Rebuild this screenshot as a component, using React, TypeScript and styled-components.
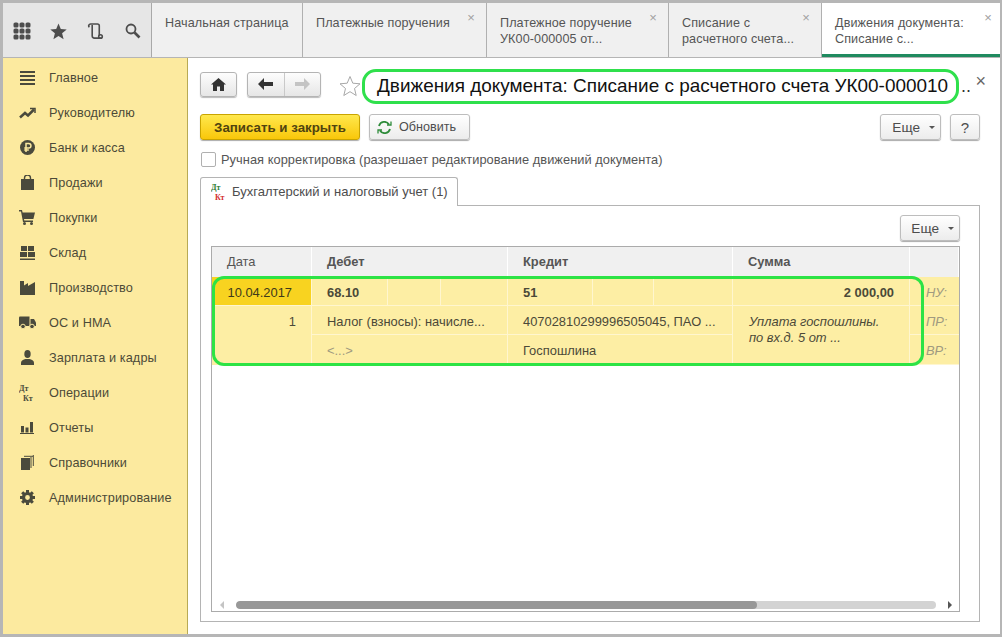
import React from 'react';
import styled, { createGlobalStyle } from 'styled-components';

const Global = createGlobalStyle`
  html, body { margin: 0; padding: 0; background: #b4b4b4; }
  * { box-sizing: border-box; }
  body { font-family: "Liberation Sans", Arial, sans-serif; }
`;

const Page = styled.div`
  width: 1002px; height: 637px; overflow: hidden;
  padding: 3px 2px 3px 3px;
  background: #b6b6b6;
  display: flex; flex-direction: column;
`;
const TopBar = styled.div`
  height: 55px; flex: none; display: flex; background: #efefef;
  border-bottom: 1px solid #b5b5b5;
`;
const QuickTools = styled.div`
  width: 149px; flex: none; display: flex; align-items: center;
  padding: 2px 0 0 0; background: #e6e6e6; border-right: 1px solid #a9a9a9;
`;
const ToolSlot = styled.div`
  width: 37px; height: 24px; display: flex; align-items: center; justify-content: center;
`;
const Tab = styled.div<{ $w: number; $active?: boolean }>`
  position: relative; width: ${p => p.$w}px; flex: ${p => (p.$active ? '1' : 'none')};
  padding: 12px 0 0 13px; font-size: 12.6px; line-height: 16px; color: #555;
  letter-spacing: 0.1px;
  background: ${p => (p.$active ? '#fff' : '#f0f0f0')};
  border-right: ${p => (p.$active ? '0' : '1px solid #b0b0b0')};
  ${p => (p.$active ? 'border-bottom: 3px solid #1f8a5f;' : '')}
  white-space: pre;
`;
const TabClose = styled.span<{ $active?: boolean }>`
  position: absolute; top: 8px; right: ${p => (p.$active ? 8 : 11)}px;
  font-size: 13px; line-height: 13px; color: #a0a0a0;
`;
const Body = styled.div`
  flex: 1; display: flex; min-height: 0; background: #fff;
`;
const Sidebar = styled.nav`
  width: 185px; flex: none; padding: 2px 0 0 0; background: #fcea9f; border-right: 1px solid #b8aa55;
`;
const NavItem = styled.div`
  height: 35px; display: flex; align-items: center; padding-left: 15px;
  font-size: 12.7px; color: #4c4a38; letter-spacing: 0.1px;
`;
const NavIcon = styled.div`
  width: 18px; margin-right: 13px; height: 18px; flex: none; display: flex; align-items: center; justify-content: center;
`;
const Content = styled.main`
  flex: 1; min-width: 0; padding: 11px 20px 12px 12px; display: flex; flex-direction: column;
`;
const TitleRow = styled.div`
  height: 34px; flex: none; display: flex; align-items: center; margin-bottom: 11px; position: relative;
`;
const NavButton = styled.div<{ $w: number }>`
  width: ${p => p.$w}px; height: 25px; margin-bottom: 4px; display: flex; align-items: center; justify-content: center;
  border: 1px solid #b4b4b4; border-radius: 3px;
  background: linear-gradient(#fdfdfd, #e6e6e6); box-shadow: 0 1px 1px #bbb;
`;
const NavGroup = styled.div`
  width: 74px; height: 25px; display: flex; margin: 0 18px 4px 10px;
  border: 1px solid #b4b4b4; border-radius: 3px; overflow: hidden;
  background: linear-gradient(#fdfdfd, #e6e6e6); box-shadow: 0 1px 1px #bbb;
`;
const NavHalf = styled.div<{ $divider?: boolean }>`
  flex: 1; display: flex; align-items: center; justify-content: center;
  ${p => (p.$divider ? 'border-right: 1px solid #c9c9c9;' : '')}
`;
const TitlePill = styled.div`
  width: 597px; height: 35px; margin-left: 1px; flex: none; padding-left: 12px; display: flex; align-items: center;
  border: 3px solid #2fe04c; border-radius: 14px;
  font-size: 18.95px; color: #111; white-space: nowrap; overflow: hidden;
`;
const Ellipsis = styled.span`
  font-size: 18px; color: #333; margin-left: 2px; align-self: center;
`;
const CloseX = styled.span`
  position: absolute; right: -6px; top: 2px; font-size: 18px; line-height: 20px; color: #666;
`;
const Toolbar = styled.div`
  height: 26px; flex: none; display: flex; align-items: center; gap: 9px; margin-bottom: 11px;
`;
const PrimaryButton = styled.div`
  width: 160px; height: 26px; display: flex; align-items: center; justify-content: center;
  font-size: 13.3px; font-weight: bold; color: #4f4310;
  border: 1px solid #c9a400; border-radius: 3px;
  background: linear-gradient(#ffe84d, #f9c70a); box-shadow: 0 1px 1px #aaa;
`;
const Button = styled.div<{ $w: number }>`
  width: ${p => p.$w}px; height: 26px; display: flex; align-items: center; justify-content: center; gap: 7px; flex: none;
  font-size: 13px; color: #4d4d4d;
  border: 1px solid #bdbdbd; border-radius: 3px;
  background: linear-gradient(#ffffff, #ececec); box-shadow: 0 1px 1px #aaa;
`;
const RefreshButton = styled(Button)`
  justify-content: flex-start; padding-left: 7px; font-size: 12.6px;
`;
const MoreButton = styled(Button)`
  justify-content: flex-end; padding-right: 5px; gap: 9px; font-size: 13.6px;
`;
const HelpButton = styled(Button)`
  font-size: 15px;
`;
const Caret = styled.span`
  width: 0; height: 0; border-left: 3px solid transparent; border-right: 3px solid transparent; border-top: 3px solid #555;
`;
const Spacer = styled.div` flex: 1; `;
const CheckRow = styled.label`
  height: 16px; flex: none; display: flex; align-items: center; gap: 5px; margin-bottom: 10px; padding-left: 1px;
  font-size: 12.8px; color: #555; letter-spacing: 0.06px;
`;
const CheckBox = styled.span`
  width: 15px; height: 15px; border: 1px solid #b0b0b0; border-radius: 2px; background: #fff;
`;
const TabStrip = styled.div`
  height: 29px; flex: none; display: flex; margin-bottom: -1px; position: relative; z-index: 1;
`;
const PageTab = styled.div`
  width: 258px; height: 29px; display: flex; align-items: center; gap: 5px; padding: 0 0 2px 10px;
  font-size: 13px; color: #4d4d4d; background: #fff;
  border: 1px solid #b4b4b4; border-bottom: 0; border-radius: 3px 3px 0 0;
`;
const Panel = styled.section`
  flex: 1; min-height: 0; border: 1px solid #b4b4b4; padding: 9px 19px 9px 10px; display: flex; flex-direction: column;
`;
const PanelBar = styled.div`
  height: 26px; flex: none; display: flex; justify-content: flex-end; margin-bottom: 5px;
`;
const TableBox = styled.div`
  position: relative; flex: 1; min-height: 0; border: 1px solid #ababab; display: flex; flex-direction: column;
`;
const columns = '100px 196px 225px 177px 1fr';
const HeadRow = styled.div`
  height: 30px; flex: none; display: grid; grid-template-columns: ${columns}; background: #f0f0f0;
`;
const HeadCell = styled.div<{ $bold?: boolean }>`
  display: flex; align-items: center; padding: 0 0 2px 15px; font-size: 12.9px; color: #555;
  font-weight: ${p => (p.$bold ? 'bold' : 'normal')};
  border-right: 1px solid #fff;
`;
const Rows = styled.div`
  height: 88px; flex: none; display: grid; grid-template-columns: ${columns};
  grid-template-rows: 29px 29px 30px; background: #fdeea4;
`;
const Cell = styled.div<{ $head?: boolean; $right?: boolean; $grey?: boolean; $noLine?: boolean }>`
  display: flex; align-items: center; min-width: 0; padding: 2px 15px 0; font-size: 12.9px; white-space: nowrap;
  color: ${p => (p.$grey ? '#a09a80' : '#4b4938')};
  font-weight: ${p => (p.$head ? 'bold' : 'normal')};
  justify-content: ${p => (p.$right ? 'flex-end' : 'flex-start')};
  border-right: 1px solid #fff6cf;
  border-bottom: ${p => (p.$noLine ? '0' : '1px solid #fff6cf')};
`;
const DateCell = styled(Cell)`
  background: #f8d320; color: #3f3a1a; padding: 2px 19px 0 0; justify-content: flex-end; font-size: 12.9px;
`;
const SubCells = styled.div<{ $cols: string }>`
  display: grid; grid-template-columns: ${p => p.$cols}; border-right: 1px solid #fff6cf; border-bottom: 1px solid #fff6cf;
`;
const SubCell = styled.div<{ $line?: boolean }>`
  display: flex; align-items: center; padding: 2px 0 0 15px; font-size: 12.9px; font-weight: bold; color: #4b4938;
  ${p => (p.$line ? 'border-right: 1px solid #fff6cf;' : '')}
`;
const NoteCell = styled.div`
  grid-row: span 2; padding: 8px 15px 0 16px; font-size: 12.9px; line-height: 16px; font-style: italic; color: #4b4938;
  border-right: 1px solid #fff6cf; white-space: pre-line;
`;
const Tag = styled.div`
  display: flex; align-items: center; padding: 2px 0 0 16px; font-size: 12.9px; font-style: italic; color: #a09a80;
  border-bottom: 1px solid #fff6cf;
`;
const Highlight = styled.div`
  position: absolute; left: 0; top: 29px; width: 712px; height: 90px;
  border: 3px solid #2de345; border-radius: 12px; pointer-events: none;
`;
const Scroll = styled.div`
  position: absolute; left: 8px; right: 7px; bottom: 2px; height: 8px; display: flex; align-items: center; gap: 12px;
`;
const Track = styled.div`
  flex: 1; height: 8px; border-radius: 4px; background: #d3d3d3; overflow: hidden;
`;
const Thumb = styled.div`
  width: 74.4%; height: 8px; border-radius: 4px; background: #989898;
`;
const Arrow = styled.span<{ $dir: 'l' | 'r' }>`
  width: 0; height: 0; border-top: 4px solid transparent; border-bottom: 4px solid transparent;
  ${p => (p.$dir === 'l' ? 'border-right: 4px solid #c4c4c4;' : 'border-left: 4px solid #555;')}
`;

const D = '#4a4a3c';
const G = '#4d4d4d';

const DtKt = ({ dt = D, kt = D }: { dt?: string; kt?: string }) => (
  <svg width="16" height="17" viewBox="0 0 16 17" fontFamily="Liberation Serif, serif" fontWeight="bold" fontSize="8">
    <text x="0" y="7" fill={dt}>Дт</text>
    <text x="4" y="16.500" fill={kt}>Кт</text>
  </svg>
);

const Icon = {
  apps: (
    <svg width="18" height="18" viewBox="0 0 18 18" fill={G}>
      {[0, 6, 12].flatMap(y => [0, 6, 12].map(x => <rect key={`${x}${y}`} x={x + 0.5} y={y + 0.5} width="5" height="5" rx="1.6" />))}
    </svg>
  ),
  star: (
    <svg width="17" height="17" viewBox="0 0 17 17" fill={G}><path d="M8.5 0.5l2.3 5.6 5.9.4-4.6 3.8 1.5 5.9-5.1-3.2-5.1 3.2 1.5-5.9L.3 6.5l5.9-.4z" /></svg>
  ),
  scroll: (
    <svg width="17" height="17" viewBox="0 0 18 18" fill="none" stroke={G} strokeWidth="1.7">
      <path d="M2.5 4.5A2 2 0 0 1 4 1h7c1.5 0 2 1 2 2v10.500" />
      <path d="M5.500 2v11.500c0 1.500 1 2.500 2.500 2.500h7.500" />
      <circle cx="14.300" cy="14.300" r="1.900" />
    </svg>
  ),
  search: (
    <svg width="16" height="16" viewBox="0 0 16 16" fill="none" stroke={G}><circle cx="6" cy="6" r="4.500" strokeWidth="1.800" /><path d="M9.500 9.500l5 5" strokeWidth="2.600" /></svg>
  ),
  menu: (
    <svg width="15" height="14" viewBox="0 0 15 14" fill={D}><rect y="0" width="15" height="2" /><rect y="4" width="15" height="2" /><rect y="8" width="15" height="2" /><rect y="12" width="15" height="2" /></svg>
  ),
  trend: (
    <svg width="17" height="12" viewBox="0 0 17 12" fill="none" stroke={D} strokeWidth="2.500"><path d="M1 10.500l5-4.500 3 2.500 6-6" /><path d="M11 1.500h5v4.500" strokeWidth="1.500" /></svg>
  ),
  rub: (
    <svg width="15" height="15" viewBox="0 0 15 15"><circle cx="7.500" cy="7.500" r="7.500" fill={D} /><path d="M6 12V3.500h2.700a2.200 2.200 0 0 1 0 4.500H4.300M4.300 10h4.500" fill="none" stroke="#fcea9f" strokeWidth="1.500" /></svg>
  ),
  bag: (
    <svg width="13" height="15" viewBox="0 0 13 15"><path d="M0 4h13v11H0z" fill={D} /><path d="M3.500 6V3a3 3 0 0 1 6 0v3" fill="none" stroke={D} strokeWidth="1.400" /></svg>
  ),
  cart: (
    <svg width="16" height="15" viewBox="0 0 16 15" fill={D}><path d="M0 0h3l.6 2.500H16l-1.600 6.500H5l.3 1.500H14V12H4L2 1.500H0z" /><circle cx="5.500" cy="13.500" r="1.500" /><circle cx="12.500" cy="13.500" r="1.500" /></svg>
  ),
  store: (
    <svg width="15" height="14" viewBox="0 0 15 14" fill={D}><rect x="1" width="6" height="5" /><rect x="8" width="6" height="5" /><rect y="6" width="7" height="5" /><rect x="8" y="6" width="7" height="5" /><rect y="12.500" width="15" height="1.500" /></svg>
  ),
  factory: (
    <svg width="15" height="14" viewBox="0 0 15 14" fill={D}><path d="M0 14V0h4v4.500L8 2v3l7-4v13z" /></svg>
  ),
  truck: (
    <svg width="17" height="13" viewBox="0 0 17 13" fill={D}><path d="M0 1.500Q0 .5 1 .5h9.500v9.500H0z" /><path d="M11.500 3H15l2 3.500V10h-5.500z" /><circle cx="4" cy="10.500" r="2.300" stroke="#fcea9f" /><circle cx="13" cy="10.500" r="2.300" stroke="#fcea9f" /></svg>
  ),
  person: (
    <svg width="13" height="15" viewBox="0 0 13 15" fill={D}><ellipse cx="6.500" cy="4" rx="3.200" ry="4" /><path d="M0 15v-2.500c0-2 2.500-3 4.500-3.500h4c2 .5 4.500 1.500 4.500 3.500V15z" /></svg>
  ),
  bars: (
    <svg width="14" height="12" viewBox="0 0 14 12" fill={D}><rect x="1" y="4" width="3" height="6.500" /><rect x="5.500" y="5.500" width="3" height="5" /><rect x="10" y="0" width="3" height="10.500" /><rect y="11" width="14" height="1" /></svg>
  ),
  books: (
    <svg width="13" height="15" viewBox="0 0 13 15" fill={D}><path d="M0 3h9v12H0z" /><path d="M10 2v11M12.300 0v11M3 1.300h9" fill="none" stroke={D} strokeWidth="1" /></svg>
  ),
  gear: (
    <svg width="15" height="15" viewBox="0 0 15 15">
      <circle cx="7.500" cy="7.500" r="4" fill="none" stroke={D} strokeWidth="3.200" />
      {[0, 45, 90, 135, 180, 225, 270, 315].map(a => <rect key={a} x="6" y="0" width="3" height="3" fill={D} transform={`rotate(${a} 7.500 7.500)`} />)}
    </svg>
  ),
  home: (
    <svg width="15" height="13" viewBox="0 0 15 13" fill="#333"><path d="M7.500 0L15 6.500h-2V13H9V8.500H6V13H2V6.500H0z" /></svg>
  ),
  back: (
    <svg width="15" height="12" viewBox="0 0 15 12" fill="#333"><path d="M0 6l6-6v4h9v4H6v4z" /></svg>
  ),
  forward: (
    <svg width="15" height="12" viewBox="0 0 15 12" fill="#c4c4c4"><path d="M15 6L9 0v4H0v4h9v4z" /></svg>
  ),
  bigStar: (
    <svg width="22" height="22" viewBox="0 0 22 22" fill="#fff" stroke="#a8a8a8"><path d="M11 1.500l2.800 6.700 7.200.6-5.500 4.700 1.700 7-6.200-3.800-6.200 3.800 1.700-7L1 8.800l7.200-.6z" /></svg>
  ),
  refresh: (
    <svg width="15" height="13" viewBox="0 0 15 13" fill="none" stroke="#2e8b3a" strokeWidth="1.800"><path d="M2 5a5.500 5.500 0 0 1 10-1.500M13 8a5.500 5.500 0 0 1-10 1.500" /><path d="M10 4h4V.5M5 9H1v3.500" strokeWidth="1.300" /></svg>
  ),
};

const nav: [React.ReactNode, string][] = [
  [Icon.menu, 'Главное'],
  [Icon.trend, 'Руководителю'],
  [Icon.rub, 'Банк и касса'],
  [Icon.bag, 'Продажи'],
  [Icon.cart, 'Покупки'],
  [Icon.store, 'Склад'],
  [Icon.factory, 'Производство'],
  [Icon.truck, 'ОС и НМА'],
  [Icon.person, 'Зарплата и кадры'],
  [<DtKt />, 'Операции'],
  [Icon.bars, 'Отчеты'],
  [Icon.books, 'Справочники'],
  [Icon.gear, 'Администрирование'],
];

export default function App() {
  return (
    <Page>
      <Global />
      <TopBar>
        <QuickTools>
          <ToolSlot>{Icon.apps}</ToolSlot>
          <ToolSlot>{Icon.star}</ToolSlot>
          <ToolSlot>{Icon.scroll}</ToolSlot>
          <ToolSlot>{Icon.search}</ToolSlot>
        </QuickTools>
        <Tab $w={151}>Начальная страница</Tab>
        <Tab $w={184}>Платежные поручения<TabClose>×</TabClose></Tab>
        <Tab $w={182}>{'Платежное поручение\nУК00-000005 от...'}<TabClose>×</TabClose></Tab>
        <Tab $w={153}>{'Списание с\nрасчетного счета...'}<TabClose>×</TabClose></Tab>
        <Tab $w={178} $active>{'Движения документа:\nСписание с...'}<TabClose $active>×</TabClose></Tab>
      </TopBar>
      <Body>
        <Sidebar>
          {nav.map(([icon, label]) => (
            <NavItem key={label}><NavIcon>{icon}</NavIcon>{label}</NavItem>
          ))}
        </Sidebar>
        <Content>
          <TitleRow>
            <NavButton $w={37}>{Icon.home}</NavButton>
            <NavGroup>
              <NavHalf $divider>{Icon.back}</NavHalf>
              <NavHalf>{Icon.forward}</NavHalf>
            </NavGroup>
            {Icon.bigStar}
            <TitlePill>Движения документа: Списание с расчетного счета УК00-000010</TitlePill>
            <Ellipsis>..</Ellipsis>
            <CloseX>×</CloseX>
          </TitleRow>
          <Toolbar>
            <PrimaryButton>Записать и закрыть</PrimaryButton>
            <RefreshButton $w={101}>{Icon.refresh}Обновить</RefreshButton>
            <Spacer />
            <MoreButton $w={61}>Еще <Caret /></MoreButton>
            <HelpButton $w={30}>?</HelpButton>
          </Toolbar>
          <CheckRow><CheckBox />Ручная корректировка (разрешает редактирование движений документа)</CheckRow>
          <TabStrip>
            <PageTab><DtKt dt="#2e7d32" kt="#d32f2f" />Бухгалтерский и налоговый учет (1)</PageTab>
          </TabStrip>
          <Panel>
            <PanelBar><MoreButton $w={60}>Еще <Caret /></MoreButton></PanelBar>
            <TableBox>
              <HeadRow>
                <HeadCell>Дата</HeadCell>
                <HeadCell $bold>Дебет</HeadCell>
                <HeadCell $bold>Кредит</HeadCell>
                <HeadCell $bold>Сумма</HeadCell>
                <HeadCell />
              </HeadRow>
              <Rows>
                <DateCell>10.04.2017</DateCell>
                <SubCells $cols="76px 53px 1fr"><SubCell $line>68.10</SubCell><SubCell $line /><SubCell /></SubCells>
                <SubCells $cols="85px 61px 1fr"><SubCell $line>51</SubCell><SubCell $line /><SubCell /></SubCells>
                <Cell $head $right>2 000,00</Cell>
                <Tag>НУ:</Tag>
                <Cell $right $noLine>1</Cell>
                <Cell>Налог (взносы): начисле...</Cell>
                <Cell>40702810299996505045, ПАО ...</Cell>
                <NoteCell>{'Уплата госпошлины.\nпо вх.д. 5 от ...'}</NoteCell>
                <Tag>ПР:</Tag>
                <Cell $noLine />
                <Cell $grey>&lt;...&gt;</Cell>
                <Cell>Госпошлина</Cell>
                <Tag>ВР:</Tag>
              </Rows>
              <Highlight />
              <Scroll>
                <Arrow $dir="l" />
                <Track><Thumb /></Track>
                <Arrow $dir="r" />
              </Scroll>
            </TableBox>
          </Panel>
        </Content>
      </Body>
    </Page>
  );
}
